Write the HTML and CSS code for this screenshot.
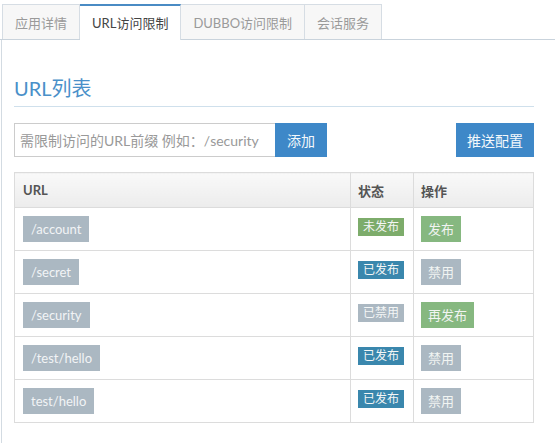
FILE: index.html
```html
<!DOCTYPE html>
<html lang="zh">
<head>
<meta charset="utf-8">
<title>URL访问限制</title>
<link rel="stylesheet" href="styles.css">
</head>
<body>
<div class="tabs">
  <div class="tab">应用详情</div>
  <div class="tab active">URL访问限制</div>
  <div class="tab">DUBBO访问限制</div>
  <div class="tab">会话服务</div>
</div>
<div class="panel">
  <h2 class="title">URL列表</h2>
  <div class="toolbar">
    <div class="add-group">
      <input class="url-input" type="text" placeholder="需限制访问的URL前缀 例如：/security">
      <button class="btn">添加</button>
    </div>
    <button class="btn">推送配置</button>
  </div>
  <table class="grid">
    <thead>
      <tr><th class="c-url">URL</th><th class="c-st">状态</th><th class="c-op">操作</th></tr>
    </thead>
    <tbody>
      <tr><td class="c-url"><span class="path">/account</span></td><td class="c-st"><span class="lbl lbl-green">未发布</span></td><td class="c-op"><span class="op op-green">发布</span></td></tr>
      <tr><td class="c-url"><span class="path">/secret</span></td><td class="c-st"><span class="lbl lbl-blue">已发布</span></td><td class="c-op"><span class="op op-gray">禁用</span></td></tr>
      <tr><td class="c-url"><span class="path">/security</span></td><td class="c-st"><span class="lbl lbl-gray">已禁用</span></td><td class="c-op"><span class="op op-green">再发布</span></td></tr>
      <tr><td class="c-url"><span class="path">/test/hello</span></td><td class="c-st"><span class="lbl lbl-blue">已发布</span></td><td class="c-op"><span class="op op-gray">禁用</span></td></tr>
      <tr><td class="c-url"><span class="path">test/hello</span></td><td class="c-st"><span class="lbl lbl-blue">已发布</span></td><td class="c-op"><span class="op op-gray">禁用</span></td></tr>
    </tbody>
  </table>
</div>
</body>
</html>
```
FILE: styles.css
```css
html, body {
  margin: 0;
  padding: 0;
  background: #fff;
  font-family: Lato, "Noto Sans CJK SC", sans-serif;
  color: #555;
}

.tabs {
  display: flex;
  align-items: flex-end;
  padding: 4px 0 0 2px;
  height: 35px;
  border-bottom: 1px solid #c9d3dc;
}

.tab {
  box-sizing: border-box;
  height: 35px;
  padding: 0 12px;
  display: flex;
  align-items: center;
  font-size: 13px;
  color: #9a9a9a;
  background: #f7f7f7;
  border: 1px solid #d6dde4;
  border-bottom: none;
  border-left: none;
}

.tab:first-child {
  border-left: 1px solid #d6dde4;
}

.tab.active {
  height: 36px;
  margin-bottom: -1px;
  background: #fff;
  color: #444;
  border-top: 2px solid #4a8bc4;
  padding-bottom: 2px;
}

.panel {
  margin-left: 1px;
  border-left: 1px solid #d3dbe2;
  padding: 34px 21px 0 12px;
  height: 403px;
  box-sizing: border-box;
}

.title {
  margin: 0;
  font-size: 20px;
  font-weight: normal;
  line-height: 28px;
  color: #4a90c9;
  padding-bottom: 4px;
  border-bottom: 1px solid #cfe0ec;
}

.toolbar {
  display: flex;
  justify-content: space-between;
  margin-top: 16px;
}

.add-group {
  display: flex;
}

.url-input {
  box-sizing: border-box;
  width: 261px;
  height: 34px;
  margin: 0;
  padding: 0 5px;
  border: 1px solid #cccccc;
  border-right: none;
  font-family: inherit;
  font-size: 14px;
  color: #555;
  outline: none;
}

.url-input::placeholder {
  color: #999;
}

.btn {
  box-sizing: border-box;
  height: 34px;
  margin: 0;
  padding: 0 11px;
  border: none;
  background: #3e88c8;
  color: #f4f8fb;
  font-family: inherit;
  font-size: 14px;
}

.add-group .btn {
  width: 52px;
  padding: 0;
}

.grid {
  margin-top: 15px;
  width: 520px;
  border-collapse: collapse;
  font-size: 13px;
}

.grid th,
.grid td {
  border: 1px solid #dcdcdc;
  text-align: left;
  vertical-align: top;
}

.grid th {
  height: 35px;
  box-sizing: border-box;
  padding: 0 8px;
  vertical-align: middle;
  font-weight: bold;
  color: #555;
  background: linear-gradient(#f9f9f9, #ececec);
}

.grid td {
  height: 43px;
  box-sizing: border-box;
  padding: 8px 8px 0;
}

.grid .c-url { width: 336px; }
.grid .c-st { width: 63px; padding-left: 7px; padding-right: 0; }
.grid .c-op { padding-left: 7px; }

.path {
  display: inline-block;
  height: 26px;
  line-height: 26px;
  padding: 0 8px;
  background: #abb8c2;
  color: #f2f4f6;
  font-size: 13px;
}

.lbl {
  display: inline-block;
  height: 18px;
  line-height: 18px;
  margin-top: 2px;
  padding: 0 5px;
  font-size: 12px;
  color: #f4f6f6;
}

.lbl-green { background: #7dac6b; }
.lbl-blue { background: #3a87ad; }
.lbl-gray { background: #abb8c2; }

.op {
  display: inline-block;
  height: 26px;
  line-height: 26px;
  padding: 0 7px;
  font-size: 13px;
  color: #f1f4f2;
}

.op-green { background: #86b880; }
.op-gray { background: #abb8c2; }
```
